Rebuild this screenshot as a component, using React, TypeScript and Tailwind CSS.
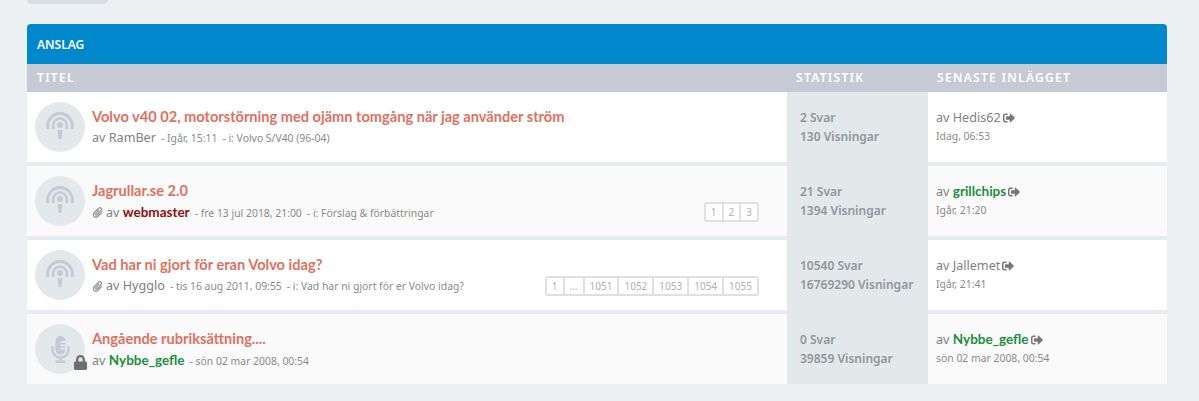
import { FaLock, FaMicrophoneAlt, FaPaperclip, FaSignOutAlt } from 'react-icons/fa';

function PodcastIcon() {
  return (
    <svg width="30" height="30" viewBox="0 0 30 30" fill="none" stroke="#c5cad4">
      <path d="M3 17 C1 8 8 1.500 15 1.500 C22 1.500 29 8 27 17" strokeWidth="3" />
      <path d="M8.500 17 C6.500 11 11 6.500 15 6.500 C19 6.500 23.500 11 21.500 17" strokeWidth="2.500" />
      <circle cx="15" cy="13" r="3" fill="#c5cad4" stroke="none" />
      <path d="M12.500 18 H17.500 L16.500 27 H13.500 Z" fill="#c5cad4" stroke="none" />
    </svg>
  );
}

function TopicIcon({ locked }: { locked?: boolean }) {
  return (
    <div className="relative flex h-[50px] w-[50px] shrink-0 items-center justify-center rounded-full bg-[#e3e8eb]">
      {locked ? <FaMicrophoneAlt className="text-[27px] text-[#c5cad4]" /> : <PodcastIcon />}
      {locked && <FaLock className="absolute bottom-[4px] right-[-3px] text-[15px] text-[#6f6f6f]" />}
    </div>
  );
}

function User({ name, color }: { name: string; color?: string }) {
  if (color === 'red') return <span className="font-['Lato',sans-serif] text-[13.500px] font-bold text-[#8b0f0f]">{name}</span>;
  if (color === 'green') return <span className="font-['Lato',sans-serif] text-[13.500px] font-bold text-[#1b8f3c]">{name}</span>;
  return <span>{name}</span>;
}

function Pager({ pages }: { pages: string[] }) {
  return (
    <div className="mt-auto mb-[14px] flex h-[20px] rounded-[3px] border-2 border-[#e0e0e0] bg-white text-[10px] text-[#b0b0b0]">
      {pages.map((p, i) => (
        <span key={p} className={`flex items-center px-[5px] ${i > 0 ? 'border-l-2 border-[#e0e0e0]' : ''}`}>
          {p}
        </span>
      ))}
    </div>
  );
}

const rows = [
  {
    title: 'Volvo v40 02, motorstörning med ojämn tomgång när jag använder ström',
    user: 'RamBer',
    date: '- Igår, 15:11',
    forum: '- i: Volvo S/V40 (96-04)',
    svar: '2 Svar',
    vis: '130 Visningar',
    last: 'Hedis62',
    lastTime: 'Idag, 06:53',
    bg: 'bg-white',
  },
  {
    title: 'Jagrullar.se 2.0',
    user: 'webmaster',
    color: 'red',
    clip: true,
    date: '- fre 13 jul 2018, 21:00',
    forum: '- i: Förslag & förbättringar',
    pages: ['1', '2', '3'],
    svar: '21 Svar',
    vis: '1394 Visningar',
    last: 'grillchips',
    lastColor: 'green',
    lastTime: 'Igår, 21:20',
    bg: 'bg-[#fafafa]',
  },
  {
    title: 'Vad har ni gjort för eran Volvo idag?',
    user: 'Hygglo',
    clip: true,
    date: '- tis 16 aug 2011, 09:55',
    forum: '- i: Vad har ni gjort för er Volvo idag?',
    pages: ['1', '...', '1051', '1052', '1053', '1054', '1055'],
    svar: '10540 Svar',
    vis: '16769290 Visningar',
    last: 'Jallemet',
    lastTime: 'Igår, 21:41',
    bg: 'bg-white',
  },
  {
    title: 'Angående rubriksättning....',
    user: 'Nybbe_gefle',
    color: 'green',
    locked: true,
    date: '- sön 02 mar 2008, 00:54',
    svar: '0 Svar',
    vis: '39859 Visningar',
    last: 'Nybbe_gefle',
    lastColor: 'green',
    lastTime: 'sön 02 mar 2008, 00:54',
    bg: 'bg-[#fafafa]',
  },
];

export default function App() {
  return (
    <div className="h-[401px] overflow-hidden bg-[#edf0f2] px-[27px] font-['Noto_Sans','Open_Sans',sans-serif] text-[#777]">
      <div className="h-[4px] w-[81px] rounded-b-[4px] bg-[#d9dde4]" />
      <div className="mt-[20px] w-[1140px]">
        <div className="flex h-[40px] items-center rounded-t-[4px] bg-[#0088cc] px-[10px] pt-[1px] text-[12px] font-semibold text-white">
          ANSLAG
        </div>
        <div className="flex h-[28px] items-center bg-[#c5cad4] text-[12px] font-semibold tracking-[1.300px] text-white">
          <div className="w-[760px] pl-[10px]">TITEL</div>
          <div className="w-[141px] pl-[9px]">STATISTIK</div>
          <div className="pl-[9px]">SENASTE INLÄGGET</div>
        </div>
        {rows.map((r, i) => {
          const isLast = i === rows.length - 1;
          const rule = isLast ? 'h-[70px]' : 'h-[74px] border-b-4 border-[#e6ebee]';
          return (
            <div key={r.title} className="flex">
              <div className={`flex w-[760px] ${r.bg} ${rule} pl-[8px] pr-[28px]`}>
                <div className="pt-[10px]">
                  <TopicIcon locked={r.locked} />
                </div>
                <div className="min-w-0 flex-1 pl-[7px] pt-[15px]">
                  <div className="font-['Lato',sans-serif] text-[14.600px] leading-[20px] font-bold text-[#e0705f]">{r.title}</div>
                  <div className="mt-[1px] flex items-baseline whitespace-nowrap text-[12.600px] leading-[20px] text-[#808080]">
                    {r.clip && <FaPaperclip className="mr-[3px] self-center text-[11px] text-[#999]" />}
                    <span>
                      av <User name={r.user} color={r.color} />
                    </span>
                    <span className="ml-[5px] text-[10.400px] text-[#8a8a8a]">{r.date}</span>
                    {r.forum && <span className="ml-[5px] text-[10.400px] text-[#8a8a8a]">{r.forum}</span>}
                  </div>
                </div>
                {r.pages && <Pager pages={r.pages} />}
              </div>
              <div className={`w-[141px] bg-[#e3e8ea] pl-[13px] pt-[16px] text-[12px] font-semibold leading-[19px] text-[#8f9699] ${isLast ? 'h-[70px]' : 'h-[74px]'}`}>
                <div>{r.svar}</div>
                <div>{r.vis}</div>
              </div>
              <div className={`flex-1 ${r.bg} ${rule} pl-[8px] pt-[16px]`}>
                <div className="flex items-center text-[12.600px] leading-[19px] text-[#808080]">
                  <span>
                    av <User name={r.last} color={r.lastColor} />
                  </span>
                  <FaSignOutAlt className="ml-[2px] text-[12px] text-[#777]" />
                </div>
                <div className="text-[10.400px] leading-[19px] text-[#8a8a8a]">{r.lastTime}</div>
              </div>
            </div>
          );
        })}
      </div>
    </div>
  );
}
